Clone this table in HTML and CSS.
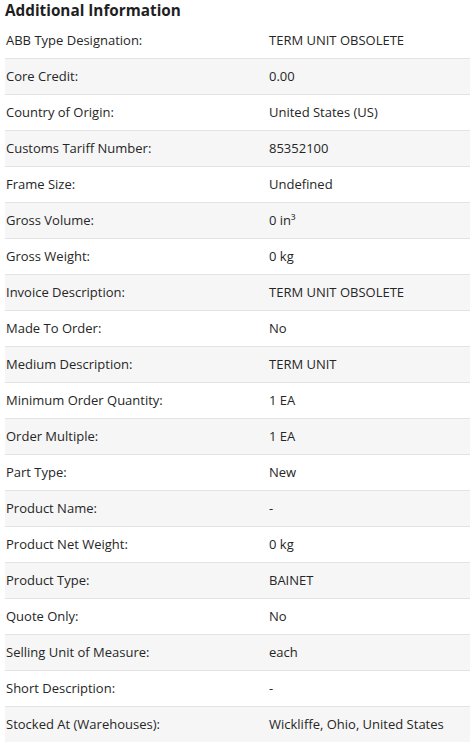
FILE: index.html
```html
<!DOCTYPE html>
<html lang="en">
<head>
<meta charset="utf-8">
<title>Additional Information</title>
<link rel="stylesheet" href="styles.css">
</head>
<body>
<section class="info">
  <h2 class="info-title">Additional Information</h2>
  <div class="info-table">
    <div class="row"><div class="label">ABB Type Designation:</div><div class="value">TERM UNIT OBSOLETE</div></div>
    <div class="row"><div class="label">Core Credit:</div><div class="value">0.00</div></div>
    <div class="row"><div class="label">Country of Origin:</div><div class="value">United States (US)</div></div>
    <div class="row"><div class="label">Customs Tariff Number:</div><div class="value">85352100</div></div>
    <div class="row"><div class="label">Frame Size:</div><div class="value">Undefined</div></div>
    <div class="row"><div class="label">Gross Volume:</div><div class="value">0 in³</div></div>
    <div class="row"><div class="label">Gross Weight:</div><div class="value">0 kg</div></div>
    <div class="row"><div class="label">Invoice Description:</div><div class="value">TERM UNIT OBSOLETE</div></div>
    <div class="row"><div class="label">Made To Order:</div><div class="value">No</div></div>
    <div class="row"><div class="label">Medium Description:</div><div class="value">TERM UNIT</div></div>
    <div class="row"><div class="label">Minimum Order Quantity:</div><div class="value">1 EA</div></div>
    <div class="row"><div class="label">Order Multiple:</div><div class="value">1 EA</div></div>
    <div class="row"><div class="label">Part Type:</div><div class="value">New</div></div>
    <div class="row"><div class="label">Product Name:</div><div class="value">-</div></div>
    <div class="row"><div class="label">Product Net Weight:</div><div class="value">0 kg</div></div>
    <div class="row"><div class="label">Product Type:</div><div class="value">BAINET</div></div>
    <div class="row"><div class="label">Quote Only:</div><div class="value">No</div></div>
    <div class="row"><div class="label">Selling Unit of Measure:</div><div class="value">each</div></div>
    <div class="row"><div class="label">Short Description:</div><div class="value">-</div></div>
    <div class="row"><div class="label">Stocked At (Warehouses):</div><div class="value">Wickliffe, Ohio, United States</div></div>
  </div>
</section>
</body>
</html>
```
FILE: styles.css
```css
html, body {
  margin: 0;
  padding: 0;
  background: #ffffff;
}
body {
  font-family: "Open Sans", "Noto Sans", sans-serif;
  color: #262626;
  overflow: hidden;
}
.info {
  padding-left: 5px;
}
.info-title {
  margin: 0;
  height: 23px;
  line-height: 21px;
  font-size: 15.3px;
  font-weight: 700;
  color: #1f1f1f;
}
.info-table {
  display: flex;
  flex-direction: column;
}
.row {
  box-sizing: border-box;
  display: grid;
  grid-template-columns: 263px 1fr;
  height: 36px;
  padding-bottom: 2px;
  align-items: center;
  border-bottom: 1px solid #e3e3e3;
  font-size: 13px;
}
.row:nth-child(even) {
  background: #f6f6f6;
}
.label, .value {
  padding-left: 1px;
}
```
